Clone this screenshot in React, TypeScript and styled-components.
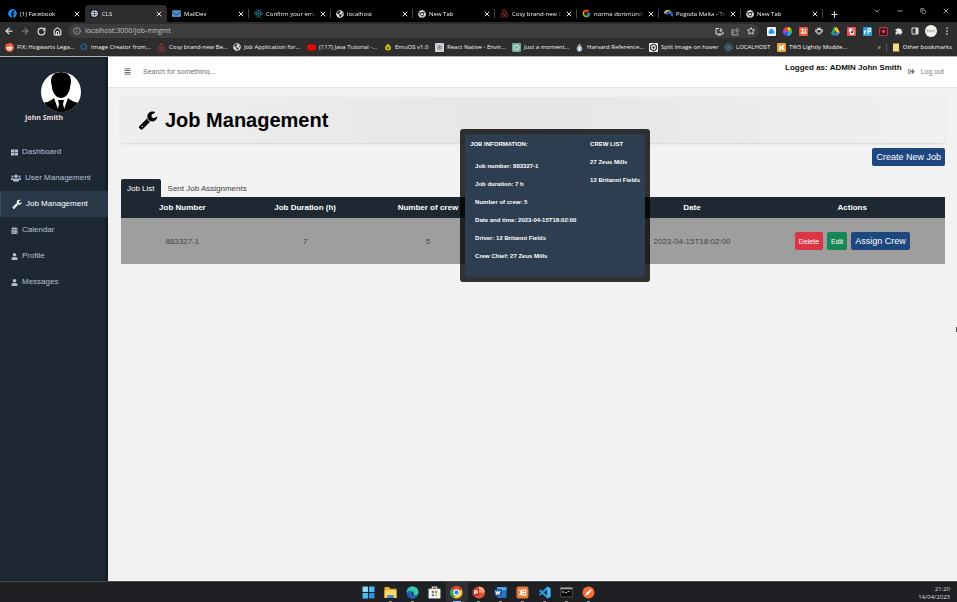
import React from "react";
import styled, { createGlobalStyle, css } from "styled-components";
import {
  FaAirbnb, FaAlignJustify, FaCalendarAlt, FaChrome, FaEnvelope, FaFacebook, FaGlobeAmericas,
  FaReact, FaRedditAlien, FaSignOutAlt, FaThLarge, FaUser, FaUsers, FaYoutube,
} from "react-icons/fa";
import { FcGoogle } from "react-icons/fc";
import {
  ArrowLeft, ArrowRight, ChevronDown, Copy, Home, Info, Minus, Plus,
  RotateCw, Search, Star, X,
} from "lucide-react";

const GlobalStyle = createGlobalStyle`
  * { box-sizing: border-box; }
  body { margin: 0; font-family: "Liberation Sans", Arial, sans-serif; font-size: 8px; background: #f2f2f2; }
  button, input { font: inherit; border: 0; padding: 0; margin: 0; background: none; color: inherit; }
  a { color: inherit; text-decoration: none; }
  p, h1, h2, ul { margin: 0; padding: 0; list-style: none; }
  svg { display: block; flex: none; }
`;

const Screen = styled.div`
  display: flex;
  flex-direction: column;
  min-height: 100vh;
  overflow: hidden;
`;

/* ---------- browser ---------- */
const Browser = styled.header`
  font-family: "Open Sans", "Noto Sans", sans-serif;
  font-size: 6px;
  font-weight: 500;
  line-height: 10px;
  color: #f4f4f4;
`;
const TabStrip = styled.div`
  display: flex;
  align-items: flex-end;
  height: 22px;
  padding-left: 3px;
  background: #000;
`;
const Tab = styled.div<{ $active?: boolean; $line?: boolean }>`
  display: flex;
  align-items: center;
  gap: 3px;
  flex: 0 1 82px;
  min-width: 0;
  height: 17px;
  padding: 0 4px 0 5px;
  border-radius: 4px 4px 0 0;
  background: ${(p) => (p.$active ? "#2d2d2e" : "transparent")};
  ${(p) =>
    p.$line &&
    css`
      background: linear-gradient(#444, #444) 100% 50% / 1px 9px no-repeat;
    `}
`;
const TabTitle = styled.span`
  flex: 1;
  min-width: 0;
  overflow: hidden;
  white-space: nowrap;
  mask-image: linear-gradient(90deg, #000 85%, transparent);
`;
const IconButton = styled.button<{ $size?: number }>`
  display: flex;
  align-items: center;
  justify-content: center;
  flex: none;
  width: ${(p) => p.$size ?? 16}px;
  height: 16px;
  color: #e4e4e4;
`;
const WindowControls = styled.div`
  display: flex;
  align-self: center;
  margin-left: auto;
`;
const Toolbar = styled.div`
  display: flex;
  align-items: center;
  height: 18px;
  padding: 0 2px 0 1px;
  background: #2d2d2e;
`;
const AddressBar = styled.div`
  display: flex;
  align-items: center;
  flex: 1;
  height: 14px;
  margin: 0 4px 0 3px;
  padding-left: 5px;
  gap: 4px;
  border-radius: 7px;
  background: #3d3d3e;
`;
const UrlField = styled.label`
  flex: 1;
  display: grid;
  align-items: center;
  font-size: 7px;
  line-height: 12px;
`;
const UrlInput = styled.input`
  width: 100%;
  height: 12px;
  color: #c4c4c4;
  outline: none;
`;
const PageActions = styled.div`
  display: flex;
`;
const Bookmarks = styled.nav`
  display: flex;
  align-items: center;
  height: 16px;
  padding: 0 5px 2px;
  background: #2d2d2e;
`;
const Bookmark = styled.a<{ $width?: number }>`
  display: flex;
  align-items: center;
  gap: 3px;
  flex: ${(p) => (p.$width ? `0 0 ${p.$width}px` : "none")};
  white-space: nowrap;
`;
const BookmarksEnd = styled.div`
  display: flex;
  align-items: center;
  gap: 5px;
  margin-left: auto;
`;
const Divider = styled.span`
  width: 1px;
  height: 9px;
  background: #555;
`;

/* ---------- application ---------- */
const AppFrame = styled.div`
  display: flex;
  flex: 1;
  border-top: 1px solid #b0b0b0;
`;
const Sidebar = styled.aside`
  flex: 0 0 108px;
  color: #b3c0d4;
  background: #1e2832;
  box-shadow: inset -2px 0 2px #121b25;
`;
const Profile = styled.div`
  display: flex;
  flex-direction: column;
  gap: 1px;
  height: 82px;
  padding: 15px 0 0 25px;
  font: bold 7px/10px "Open Sans", "Noto Sans", sans-serif;
  color: #f0d8df;
`;
const AvatarSpot = styled.div`
  padding-left: 16px;
`;
const MenuLink = styled.a<{ $active?: boolean }>`
  display: flex;
  align-items: center;
  gap: 4px;
  height: 26px;
  padding: 0 0 0 11px;
  line-height: 10px;
  ${(p) =>
    p.$active &&
    css`
      padding-left: 12px;
      color: #fff;
      background: #2a394a;
      box-shadow: inset 1px 0 0 #2b5557;
    `}
`;
const Main = styled.main`
  flex: 1;
  min-width: 0;
  background: #f2f2f2;
`;
const TopBar = styled.div`
  display: flex;
  align-items: center;
  height: 31px;
  padding: 0 13px 1px 16px;
  background: #fff;
  border-bottom: 1px solid #e3e3e3;
  color: #6c6f73;
  font-size: 7px;
`;
const MenuToggle = styled.button`
  color: #3c4145;
  margin-right: 12px;
`;
const SearchInput = styled.input`
  flex: 1;
  min-width: 0;
  outline: none;
  &::placeholder { color: #6c6f73; opacity: 1; }
`;
const Identity = styled.strong`
  align-self: flex-start;
  padding-top: 6px;
  font-size: 8px;
  line-height: 10px;
  color: #111;
`;
const Logout = styled.a`
  display: flex;
  align-items: center;
  gap: 6px;
  margin-left: 6px;
  color: #7b7e82;
`;
const Content = styled.div`
  padding: 9px 12px 10px 13px;
`;
const TitleCard = styled.div`
  display: flex;
  align-items: center;
  gap: 7px;
  height: 46px;
  padding-left: 17px;
  border-radius: 3px;
  color: #000;
  background: linear-gradient(90deg, #eee, #e6e6e6 50%, #f0f0f0);
  box-shadow: 0 1px 2px #d4d4d4;
`;
const Title = styled.h1`
  font-size: 20px;
  line-height: 24px;
`;
const ActionsBar = styled.div`
  display: flex;
  justify-content: flex-end;
  padding: 5px 0 13px;
`;
const tones = { blue: "#1f477f", red: "#dc3546", green: "#188754" };
const Button = styled.button<{ $tone: keyof typeof tones; $small?: boolean }>`
  height: 18px;
  padding: 0 4px;
  border-radius: 2px;
  font-size: ${(p) => (p.$small ? 7 : 9)}px;
  color: #fff;
  background: ${(p) => tones[p.$tone]};
`;
const PageTabs = styled.div`
  display: flex;
  gap: 1px;
`;
const PageTab = styled.button<{ $active?: boolean }>`
  height: 18px;
  padding: 0 6px;
  border-radius: 2px 2px 0 0;
  color: ${(p) => (p.$active ? "#fff" : "#444")};
  background: ${(p) => (p.$active ? "#1e2832" : "transparent")};
`;
const JobTable = styled.table`
  width: 100%;
  table-layout: fixed;
  border-collapse: collapse;
  text-align: center;
  color: #444;
  background: #9e9e9e;
  th { height: 21px; padding: 0; color: #fff; background: #1e2832; }
  td { height: 46px; padding: 0; }
`;
const Column = styled.col<{ $share: number }>`
  width: ${(p) => p.$share / 10}%;
`;
const RowActions = styled.div`
  display: flex;
  justify-content: center;
  gap: 4px;
`;

const Dialog = styled.section`
  position: absolute;
  top: 129px;
  left: 58%;
  transform: translateX(-50%);
  padding: 5px;
  border-radius: 3px;
  background: rgba(0, 0, 0, 0.8);
`;
const DialogBody = styled.div`
  display: grid;
  grid-template-columns: 120px 55px;
  height: 143px;
  padding: 5px 0 0 5px;
  border-radius: 2px;
  font: bold 6px/10px "Liberation Sans", Arial, sans-serif;
  color: #fff;
  background: #2c3e50;
  white-space: nowrap;
  h2 { font-size: 6px; line-height: 10px; }
`;
const Details = styled.ul<{ $inset?: boolean }>`
  display: flex;
  flex-direction: column;
  gap: 8px;
  padding: ${(p) => (p.$inset ? "12px 0 0 5px" : "8px 0 0")};
`;
const Pointer = styled.span`
  position: absolute;
  right: 0;
  top: 327px;
  width: 1px;
  height: 5px;
  background: #555;
`;

/* ---------- taskbar ---------- */
const Taskbar = styled.footer`
  display: grid;
  grid-template-columns: 1fr auto 1fr;
  align-items: center;
  height: 21px;
  background: #1e2024;
  border-top: 1px solid #4a4b4d;
`;
const Apps = styled.div`
  grid-column: 2;
  display: flex;
  align-self: stretch;
`;
const AppButton = styled.button<{ $running?: boolean; $front?: boolean }>`
  display: flex;
  align-items: center;
  justify-content: center;
  width: 22px;
  border-radius: 2px;
  padding-top: 1px;
  background-color: ${(p) => (p.$front ? "#303135" : "transparent")};
  background-image: ${(p) =>
    p.$running ? `linear-gradient(${p.$front ? "#8fd0f0, #8fd0f0" : "#999, #999"})` : "none"};
  background-repeat: no-repeat;
  background-position: 50% 100%;
  background-size: ${(p) => (p.$front ? "8px 1px" : "3px 1px")};
`;
const Clock = styled.div`
  justify-self: end;
  padding: 1px 7px 0 0;
  text-align: right;
  font: 6px/8px "Open Sans", "Noto Sans", sans-serif;
  color: #ddd;
`;

const Badge = ({ bg, children, round }: { bg: string; children?: React.ReactNode; round?: boolean }) => (
  <svg width="9" height="9" viewBox="0 0 16 16">
    <rect width="16" height="16" rx={round ? 8 : 2} fill={bg} />
    {children}
  </svg>
);
const Wrench = ({ size }: { size: number }) => (
  <svg width={size} height={size} viewBox="0 0 1792 1792" fill="currentColor">
    <path d="M448 1472q0-26-19-45t-45-19-45 19-19 45 19 45 45 19 45-19 19-45zm644-420l-682 682q-37 37-90 37-52 0-91-37l-106-108q-38-36-38-90 0-53 38-91l681-681q39 98 114.5 173.5t173.5 114.5zm634-435q0 39-23 106-47 134-164.5 217.5t-258.5 83.5q-185 0-316.5-131.5t-131.5-316.5 131.5-316.5 316.5-131.5q58 0 121.5 16.5t107.5 46.5q16 11 16 28t-16 28l-293 169v224l193 107q5-3 79-48.5t135.5-81 70.5-35.5q15 0 23.5 10t8.5 25z" />
  </svg>
);
const ReactBadge = () => <FaReact size={9} color="#4a9fb5" />;
const Globe = () => <FaGlobeAmericas size={8} color="#d8d8d8" />;
const ChromeGray = () => <FaChrome size={8} color="#dedede" />;
const Bnb = () => <FaAirbnb size={9} color="#e8414b" />;
const ClsIcon = () => (
  <Badge bg="#151b2d">
    <circle cx="8" cy="8" r="6" fill="#e3e8ee" />
    <path d="M3 6h10M3 10h10M8 2v12" stroke="#39465a" strokeWidth="1.5" />
  </Badge>
);
const Rainbow = () => (
  <svg width="9" height="9" viewBox="0 0 16 16">
    <path d="M8 8V0a8 8 0 0 1 7 4z" fill="#f3cf27" />
    <path d="M8 8l7-4a8 8 0 0 1 0 8z" fill="#38c53d" />
    <path d="M8 8l7 4a8 8 0 0 1-7 4z" fill="#28b5e9" />
    <path d="M8 8v8a8 8 0 0 1-7-4z" fill="#345bed" />
    <path d="M8 8l-7 4a8 8 0 0 1 0-8z" fill="#c33be2" />
    <path d="M8 8L1 4a8 8 0 0 1 7-4z" fill="#f0443d" />
  </svg>
);
const Drive = () => (
  <svg width="9" height="9" viewBox="0 0 16 16">
    <path d="M5 1h6L6 10l-3 5-3-5z" fill="#28a85b" />
    <path d="M5 1h6l5 9h-6z" fill="#fbc22d" />
    <path d="M6 10h10l-3 5H3z" fill="#3977dc" />
  </svg>
);
const InstallIcon = () => (
  <svg width="9" height="9" viewBox="0 0 18 18" fill="none" stroke="currentColor" strokeWidth="2">
    <path d="M8 3H2v11h14v-4M6 16h6M12 2v7M9 6l3 3 3-3" />
  </svg>
);
const ShareIcon = () => (
  <svg width="9" height="9" viewBox="0 0 18 18" fill="none" stroke="#aaa" strokeWidth="2">
    <path d="M6 5H2v11h12v-4M5 12c0-4 3-6 7-6V3l4 4-4 4V8" />
  </svg>
);

const tabs = [
  { title: "(1) Facebook", icon: <FaFacebook size={9} color="#1592f5" /> },
  { title: "CLS", icon: <ClsIcon />, active: true },
  { title: "MailDev", icon: <FaEnvelope size={9} color="#4a92d0" />, line: true },
  { title: "Confirm your emai", icon: <ReactBadge />, line: true },
  { title: "localhost", icon: <Globe />, line: true },
  { title: "New Tab", icon: <ChromeGray />, line: true },
  { title: "Cosy brand-new B", icon: <Bnb />, line: true },
  { title: "norma dortmund", icon: <FcGoogle size={9} />, line: true },
  {
    title: "Pogoda Malta - Te",
    line: true,
    icon: (
      <svg width="9" height="9" viewBox="0 0 16 16">
        <path d="M1 8a6 6 0 0 1 11-2" fill="none" stroke="#f5c526" strokeWidth="3" />
        <path d="M4 10a5 5 0 0 1 10 3" fill="none" stroke="#2467d6" strokeWidth="4" />
      </svg>
    ),
  },
  { title: "New Tab", icon: <ChromeGray />, line: true },
];

const bookmarks = [
  {
    title: "FIX: Hogwarts Lega...", width: 75,
    icon: <Badge bg="#f4502a" round><FaRedditAlien x={2} y={2} size={12} color="#fff" /></Badge>,
  },
  { title: "Image Creator from...", width: 77, icon: <Search size={8} color="#2878b8" strokeWidth={3} /> },
  { title: "Cosy brand-new Be...", width: 76, icon: <Bnb /> },
  { title: "Job Application for...", width: 74, icon: <Globe /> },
  { title: "(117) Java Tutorial -...", width: 77, icon: <FaYoutube size={9} color="#f00" /> },
  {
    title: "EmuOS v1.0", width: 51,
    icon: (
      <svg width="8" height="8" viewBox="0 0 16 16">
        <path d="M8 1c3 3 6 6 6 9a6 5 0 0 1-12 0c0-3 3-6 6-9z" fill="#d2ba18" />
        <circle cx="8" cy="10" r="2" fill="#41390d" />
      </svg>
    ),
  },
  {
    title: "React Native - Envir...", width: 77,
    icon: <Badge bg="#d5d8d6"><FaReact x={2} y={2} size={12} color="#556" /></Badge>,
  },
  {
    title: "Just a moment...", width: 63,
    icon: <Badge bg="#75a99c"><circle cx="8" cy="8" r="4" fill="none" stroke="#cfe6df" strokeWidth="2" /></Badge>,
  },
  {
    title: "Harvard Reference...", width: 74,
    icon: (
      <svg width="9" height="9" viewBox="0 0 16 16">
        <path d="M8 1c2 3 5 6 5 9a5 5 0 0 1-10 0c0-3 3-6 5-9z" fill="#8fb7cc" />
        <path d="M8 7v7" stroke="#fff" strokeWidth="3" />
        <path d="M6 5h4" stroke="#d87b42" strokeWidth="2" />
      </svg>
    ),
  },
  {
    title: "Split Image on hover", width: 75,
    icon: (
      <Badge bg="#eee">
        <path d="M8 2l5 3v6l-5 3-5-3V5z" fill="none" stroke="#222" strokeWidth="2" />
        <circle cx="8" cy="8" r="2" fill="#222" />
      </Badge>
    ),
  },
  { title: "LOCALHOST", width: 53, icon: <ReactBadge /> },
  {
    title: "TW3 Lightly Modde...", width: 70,
    icon: <Badge bg="#e9a13a"><path d="M2 3l5 3 6-4-2 6 3 5-6-2-5 3 2-6z" fill="#fff" /></Badge>,
  },
];

const extensions = [
  {
    name: "Cloud",
    icon: <Badge bg="#f3f8fc"><path d="M4 12a3 3 0 0 1 0-5 4 4 0 0 1 8 0 3 3 0 0 1 0 5z" fill="#2c96ee" /></Badge>,
  },
  { name: "Colour picker", icon: <Rainbow /> },
  {
    name: "Notes",
    icon: <Badge bg="#f2512a"><path d="M3 4h5l-4 7h4M13 3L8 13M12 8v4" stroke="#fff" strokeWidth="2" fill="none" /></Badge>,
  },
  {
    name: "Settings",
    icon: (
      <svg width="8" height="8" viewBox="0 0 16 16">
        <path d="M5 1h6l1 3 4 1v5l-3 2-2 3H5l-2-3-3-2V5l4-1z" fill="#aaa" />
        <circle cx="8" cy="8" r="3" fill="#222" />
        <path d="M4 5h8" stroke="#eee" strokeWidth="2" />
      </svg>
    ),
  },
  { name: "Drive", icon: <Drive /> },
  {
    name: "Blocker",
    icon: <Badge bg="#e7534b"><path d="M4 3h4v4h4v6H6V8H4zM11 2v3" fill="#fff" stroke="#fff" /><circle cx="9" cy="9" r="2" fill="#222" /></Badge>,
  },
  {
    name: "Translate",
    icon: <Badge bg="#2d9bdd"><path d="M3 13V7h3M9 13V3h4v5H9" stroke="#fff" strokeWidth="2" fill="none" /></Badge>,
  },
  {
    name: "Recorder",
    icon: (
      <svg width="9" height="9" viewBox="0 0 16 16">
        <rect x="1" y="1" width="14" height="14" rx="2" fill="#32161e" stroke="#c62d4c" strokeWidth="2" />
        <circle cx="8" cy="8" r="3" fill="#ef3d50" />
      </svg>
    ),
  },
  {
    name: "Extensions",
    icon: (
      <svg width="8" height="8" viewBox="0 0 16 16">
        <path d="M1 4h4a2 2 0 1 1 4 0h4v4a2 2 0 1 1 0 4v3H9a2 2 0 1 0-4 0H1v-4a2 2 0 1 0 0-4z" fill="#e5e5e5" />
      </svg>
    ),
  },
  {
    name: "Side panel",
    icon: (
      <svg width="8" height="8" viewBox="0 0 16 16">
        <path d="M2 2h12v12H2z" fill="none" stroke="#ddd" strokeWidth="2" />
        <path d="M9 2h5v12H9z" fill="#ddd" />
      </svg>
    ),
  },
  {
    name: "Account",
    icon: (
      <svg width="12" height="12" viewBox="0 0 16 16">
        <circle cx="8" cy="8" r="8" fill="#f4f4f0" />
        <path d="M2 7h12M3 9h10" stroke="#a39f87" strokeWidth="1.5" strokeDasharray="2 1" />
      </svg>
    ),
  },
  {
    name: "Menu",
    icon: (
      <svg width="8" height="8" viewBox="0 0 16 16" fill="#ddd">
        <circle cx="8" cy="2" r="1.7" /><circle cx="8" cy="8" r="1.7" /><circle cx="8" cy="14" r="1.7" />
      </svg>
    ),
  },
];

const menu = [
  { label: "Dashboard", icon: <FaThLarge size={7} /> },
  { label: "User Management", icon: <FaUsers size={10} /> },
  { label: "Job Management", icon: <Wrench size={10} />, active: true },
  { label: "Calendar", icon: <FaCalendarAlt size={7} /> },
  { label: "Profile", icon: <FaUser size={7} /> },
  { label: "Messages", icon: <FaUser size={7} /> },
];

const Avatar = () => (
  <svg width="40" height="40" viewBox="0 0 40 40" role="img" aria-label="John Smith">
    <defs><clipPath id="face"><circle cx="20" cy="20" r="20" /></clipPath></defs>
    <g clipPath="url(#face)">
      <path d="M0 0h40v40H0z" fill="#fff" />
      <path d="M20 0c7 0 10 4 10 9 0 3-1 5-1 7-1 6-5 10-9 10s-8-4-9-10c0-2-1-4-1-7 0-5 3-9 10-9z" />
      <path d="M13 26l5 14H0V31c4 0 10-2 13-5zM27 26l-5 14h18V31c-4 0-10-2-13-5z" />
      <path d="M17 28h6l-1 4 2 8h-8l2-8z" />
    </g>
  </svg>
);

const taskApps = [
  {
    name: "Start",
    icon: <><path d="M1 1h10v10H1z" fill="#8bdcf9" /><path d="M13 1h10v10H13zM1 13h10v10H1z" fill="#49b9ef" /><path d="M13 13h10v10H13z" fill="#2398e5" /></>,
  },
  {
    name: "File Explorer", running: true,
    icon: <><path d="M1 2h8l3 3h11v17H1z" fill="#e7ac2e" /><path d="M1 8h22v14H1z" fill="#fbd867" /><path d="M6 17h12v5H6z" fill="#3588d1" /></>,
  },
  {
    name: "Edge", running: true,
    icon: <><circle cx="12" cy="12" r="11" fill="#1874c9" /><path d="M1 11C2 4 7 1 12 1c7 0 11 5 11 10 0 4-3 6-7 6-2 0-4-1-3-3 1-5-7-7-12-3z" fill="#36c6a8" /><path d="M8 11c-2 6 3 11 10 10-8 6-17 0-15-7 1-3 3-4 5-3z" fill="#145cae" /><path d="M10 13c0-3 4-3 4 0-1 2 0 4 3 4-4 2-7 0-7-4z" fill="#1e2733" /></>,
  },
  {
    name: "Store",
    icon: <><path d="M8 6V2h8v4" fill="none" stroke="#ddd" strokeWidth="2" /><path d="M1 5h22v18H1z" fill="#f4f4f4" /><path d="M7 9h4v4H7z" fill="#e84e2e" /><path d="M13 9h4v4h-4z" fill="#71ad28" /><path d="M7 15h4v4H7z" fill="#2796dc" /><path d="M13 15h4v4h-4z" fill="#f3b51c" /></>,
  },
  {
    name: "Chrome", running: true, front: true,
    icon: <><circle cx="12" cy="12" r="11" fill="#f9c72b" /><path d="M12 12L2 6A11 11 0 0 1 22 6z" fill="#e54236" /><path d="M12 12L7 22A11 11 0 0 1 2 6z" fill="#35a853" /><circle cx="12" cy="12" r="6" fill="#fff" /><circle cx="12" cy="12" r="4" fill="#377fe7" /></>,
  },
  {
    name: "PowerPoint", running: true,
    icon: <><circle cx="13" cy="12" r="11" fill="#db5938" /><path d="M13 1a11 11 0 0 1 11 11H13z" fill="#ff987a" /><path d="M1 6h12v12H1z" fill="#b93320" /><path d="M5 15V9h3c3 0 3 4 0 4H5" fill="none" stroke="#fff" strokeWidth="2" /></>,
  },
  {
    name: "Word", running: true,
    icon: <><path d="M6 2h17v20H6z" fill="#2b74cb" /><path d="M6 2h17v6H6z" fill="#4bace9" /><path d="M1 6h13v12H1z" fill="#1c4d9c" /><path d="M3 9l2 6 2-5 2 5 2-6" fill="none" stroke="#fff" strokeWidth="2" /></>,
  },
  {
    name: "XAMPP", running: true,
    icon: <><rect x="1" y="1" width="22" height="22" rx="4" fill="#ef7932" /><path d="M6 7l5 5-5 5M11 7l-3 5 3 5M13 7h5v5h-5zM13 12h5v5h-5z" fill="none" stroke="#fff" strokeWidth="2" strokeLinejoin="round" /></>,
  },
  {
    name: "Visual Studio Code", running: true,
    icon: <><path d="M17 1l6 3v16l-6 3L2 9l2-3 13 11V7L4 18l-2-3z" fill="#279bdc" /><path d="M17 1l6 3v16l-6 3z" fill="#4bb7f0" /></>,
  },
  {
    name: "Terminal", running: true,
    icon: <><path d="M1 3h22v17H1z" fill="#0b0b0b" stroke="#777" /><path d="M1 3h22v3H1z" fill="#aaa" /><path d="M4 9l3 2-3 2M9 12h4M14 10h4" fill="none" stroke="#ddd" strokeWidth="1.5" /></>,
  },
  {
    name: "Postman", running: true,
    icon: <><circle cx="12" cy="12" r="11" fill="#fa6b3b" /><path d="M6 18l2-5 8-7 2 2-7 8z" fill="#fff" /></>,
  },
];

const columnShares = [149, 149, 149, 164, 164, 225];

const jobDetails = [
  "Job number: 883327-1", "Job duration: 7 h", "Number of crew: 5",
  "Date and time: 2023-04-15T18:02:00", "Driver: 12 Britanni Fields", "Crew Chief: 27 Zeus Mills",
];

export default function App() {
  return (
    <Screen>
      <GlobalStyle />
      <Browser>
        <TabStrip>
          {tabs.map((t, i) => (
            <Tab key={i} $active={t.active} $line={t.line}>
              {t.icon}
              <TabTitle>{t.title}</TabTitle>
              <IconButton $size={8} aria-label="Close tab"><X size={8} strokeWidth={3} /></IconButton>
            </Tab>
          ))}
          <IconButton $size={22} aria-label="New tab"><Plus size={9} strokeWidth={3} /></IconButton>
          <WindowControls>
            <IconButton $size={23} aria-label="Search tabs"><ChevronDown size={8} /></IconButton>
            <IconButton $size={23} aria-label="Minimise"><Minus size={8} /></IconButton>
            <IconButton $size={23} aria-label="Restore"><Copy size={6} /></IconButton>
            <IconButton $size={23} aria-label="Close window"><X size={8} /></IconButton>
          </WindowControls>
        </TabStrip>
        <Toolbar>
          <IconButton aria-label="Back"><ArrowLeft size={10} strokeWidth={3} /></IconButton>
          <IconButton aria-label="Forward"><ArrowRight size={10} color="#777" strokeWidth={3} /></IconButton>
          <IconButton aria-label="Reload"><RotateCw size={9} strokeWidth={3} /></IconButton>
          <IconButton aria-label="Home"><Home size={9} strokeWidth={3} /></IconButton>
          <AddressBar>
            <Info size={8} color="#bbb" />
            <UrlField><UrlInput aria-label="Address" defaultValue="localhost:3000/job-mngmt" /></UrlField>
            <PageActions>
              <IconButton aria-label="Install"><InstallIcon /></IconButton>
              <IconButton aria-label="Share"><ShareIcon /></IconButton>
              <IconButton aria-label="Bookmark"><Star size={8} strokeWidth={3} /></IconButton>
            </PageActions>
          </AddressBar>
          {extensions.map((e) => (
            <IconButton key={e.name} aria-label={e.name}>{e.icon}</IconButton>
          ))}
        </Toolbar>
        <Bookmarks>
          {bookmarks.map((b) => (
            <Bookmark key={b.title} href="#" $width={b.width}>{b.icon}{b.title}</Bookmark>
          ))}
          <BookmarksEnd>
            <span>»</span>
            <Divider />
            <Bookmark href="#">
              <svg width="8" height="9" viewBox="0 0 16 18"><path d="M2 1h12v16H2z" fill="#f8dc83" /><path d="M12 13h3v4h-3z" fill="#d9ad42" /></svg>
              Other bookmarks
            </Bookmark>
          </BookmarksEnd>
        </Bookmarks>
      </Browser>

      <AppFrame>
        <Sidebar>
          <Profile>
            <AvatarSpot><Avatar /></AvatarSpot>
            John Smith
          </Profile>
          <nav>
            {menu.map((m) => (
              <MenuLink key={m.label} href="#" $active={m.active}>{m.icon}{m.label}</MenuLink>
            ))}
          </nav>
        </Sidebar>
        <Main>
          <TopBar>
            <MenuToggle aria-label="Toggle menu"><FaAlignJustify size={7} /></MenuToggle>
            <SearchInput aria-label="Search" placeholder="Search for something..." />
            <Identity>Logged as: ADMIN John Smith</Identity>
            <Logout href="#"><FaSignOutAlt size={7} />Log out</Logout>
          </TopBar>
          <Content>
            <TitleCard><Wrench size={20} /><Title>Job Management</Title></TitleCard>
            <ActionsBar><Button $tone="blue">Create New Job</Button></ActionsBar>
            <PageTabs>
              <PageTab $active>Job List</PageTab>
              <PageTab>Sent Job Assignments</PageTab>
            </PageTabs>
            <JobTable>
              <colgroup>
                {columnShares.map((share, i) => <Column key={i} $share={share} />)}
              </colgroup>
              <thead>
                <tr>
                  <th>Job Number</th><th>Job Duration (h)</th><th>Number of crew</th>
                  <th /><th>Date</th><th>Actions</th>
                </tr>
              </thead>
              <tbody>
                <tr>
                  <td>883327-1</td><td>7</td><td>5</td><td />
                  <td>2023-04-15T18:02:00</td>
                  <td>
                    <RowActions>
                      <Button $tone="red" $small>Delete</Button>
                      <Button $tone="green" $small>Edit</Button>
                      <Button $tone="blue">Assign Crew</Button>
                    </RowActions>
                  </td>
                </tr>
              </tbody>
            </JobTable>
          </Content>
        </Main>
      </AppFrame>

      <Dialog role="dialog" aria-label="Job information">
        <DialogBody>
          <div>
            <h2>JOB INFORMATION:</h2>
            <Details $inset>{jobDetails.map((d) => <li key={d}>{d}</li>)}</Details>
          </div>
          <div>
            <h2>CREW LIST</h2>
            <Details><li>27 Zeus Mills</li><li>12 Britanni Fields</li></Details>
          </div>
        </DialogBody>
      </Dialog>
      <Pointer />

      <Taskbar>
        <Apps>
          {taskApps.map((a) => (
            <AppButton key={a.name} aria-label={a.name} $running={a.running} $front={a.front}>
              <svg width="13" height="13" viewBox="0 0 24 24">{a.icon}</svg>
            </AppButton>
          ))}
        </Apps>
        <Clock>21:20<br />14/04/2023</Clock>
      </Taskbar>
    </Screen>
  );
}
